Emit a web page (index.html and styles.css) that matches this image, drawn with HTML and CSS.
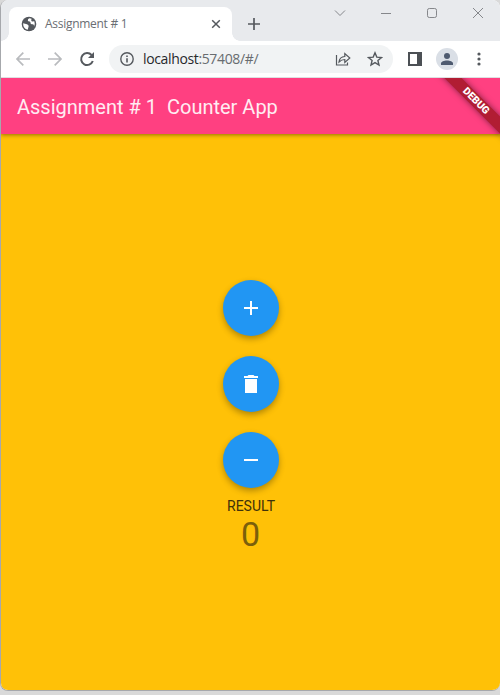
FILE: index.html
```html
<!DOCTYPE html>
<html lang="en">
<head>
<meta charset="utf-8">
<title>Assignment # 1</title>
<link rel="stylesheet" href="styles.css">
</head>
<body>
<div class="window">
  <header class="tabstrip">
    <div class="tab">
      <svg class="globe" width="16" height="16" viewBox="0 0 16 16"><circle cx="8" cy="8" r="7.3" fill="#54585d"/><path d="M2.1 7.2 6 8.2q2 .8 1.6 2.4L6.7 13.8Q2 12.4 2.1 7.2ZM8.5 2.2q-1.8.4-1.7 2 .1 1.200 1.800 1.400 1.200.2.9 1.400-.1 1.100 1.200 1.200l1.300.1q1.300.1 1 2.500Q14.400 8 13.300 5.200l-2.100.3q-1.300-.2-.9-1.500l.3-1.300Z" fill="#fff"/></svg>
      <span class="tab-title">Assignment # 1</span>
      <svg class="tab-close" width="10" height="10" viewBox="0 0 10 10"><path d="m1.200 1.200 7.600 7.600m0-7.600-7.600 7.600" stroke="#55595e" stroke-width="1.500"/></svg>
    </div>
    <svg class="new-tab" width="12" height="12" viewBox="0 0 12 12"><path d="M6 0v12M0 6h12" stroke="#55595e" stroke-width="1.700"/></svg>
    <div class="controls">
      <svg width="12" height="12" viewBox="0 0 12 12"><path d="m1 3.500 5 5 5-5"/></svg>
      <svg width="12" height="12" viewBox="0 0 12 12"><path d="M1 6.500h10"/></svg>
      <svg width="12" height="12" viewBox="0 0 12 12"><rect x="1.500" y="1.500" width="9" height="9" rx="1.800"/></svg>
      <svg width="12" height="12" viewBox="0 0 12 12"><path d="m1 1 10 10m0-10L1 11"/></svg>
    </div>
  </header>
  <nav class="toolbar">
    <svg class="nav dim" width="16" height="16" viewBox="0 0 16 16"><path d="M15 8H2m6.300-6.300L2 8l6.300 6.300"/></svg>
    <svg class="nav dim" width="16" height="16" viewBox="0 0 16 16"><path d="M1 8h13M7.700 1.700 14 8l-6.300 6.300"/></svg>
    <svg class="nav" width="16" height="16" viewBox="0 0 16 16"><path d="M12.600 4A6 6 0 1 0 13.800 10" stroke-width="2"/><path d="M15 1v6H9Z" fill="#55595e" stroke="none"/></svg>
    <div class="address">
      <svg class="info" width="14" height="14" viewBox="0 0 14 14"><circle cx="7" cy="7" r="6.200" fill="none" stroke="#55595e" stroke-width="1.400"/><path d="M6.200 6.200h1.600v4.300H6.200zM6.200 3.500h1.600V5H6.200z" fill="#55595e"/></svg>
      <span class="url">localhost<span class="rest">:57408/#/</span></span>
      <svg class="share" width="16" height="16" viewBox="0 0 16 16"><path d="M1.500 4v10h11v-2.500M4 11Q4.500 5.800 9.800 5.500v-3L14.800 7l-5 4.400V8.500Q6.500 8.500 4 11Z"/></svg>
      <svg class="star" width="16" height="16" viewBox="0 0 16 16"><path d="m8 1.800 1.800 4.300 4.700.4-3.600 3 1.100 4.600-4-2.500-4 2.500 1.100-4.600-3.600-3 4.700-.4Z"/></svg>
    </div>
    <svg class="panel" width="14" height="14" viewBox="0 0 14 14"><path fill="#4c5055" fill-rule="evenodd" d="M0 0h14v14H0ZM2 2v10h7V2Z"/></svg>
    <div class="avatar"><svg width="14" height="14" viewBox="0 0 14 14"><circle cx="7" cy="4" r="3" fill="#4e5a6f"/><path d="M1 13v-1.500C1 7.500 13 7.500 13 11.500V13Z" fill="#4e5a6f"/></svg></div>
    <svg class="more" width="4" height="14" viewBox="0 0 4 14"><g fill="#55595e"><circle cx="2" cy="2" r="1.600"/><circle cx="2" cy="7" r="1.600"/><circle cx="2" cy="12" r="1.600"/></g></svg>
  </nav>
  <div class="app">
    <div class="appbar">Assignment # 1&nbsp; Counter App</div>
    <div class="banner">DEBUG</div>
    <main class="content">
      <button class="fab"><svg width="24" height="24" viewBox="0 0 24 24"><path d="M19 13h-6v6h-2v-6H5v-2h6V5h2v6h6z"/></svg></button>
      <button class="fab"><svg width="24" height="24" viewBox="0 0 24 24"><path d="M6 21h12V7H6zM19 4h-3.500l-1-1h-5l-1 1H5v2h14V4z"/></svg></button>
      <button class="fab"><svg width="24" height="24" viewBox="0 0 24 24"><path d="M19 13H5v-2h14v2z"/></svg></button>
      <div class="label">RESULT</div>
      <div class="count">0</div>
    </main>
  </div>
</div>
</body>
</html>
```

FILE: styles.css
```css
* { box-sizing: border-box; }
body { margin: 0; height: 695px; overflow: hidden; background: #d9d9d9; }
svg { display: block; flex: none; }
.window {
  height: 691px;
  border: solid #a6a8ac;
  border-width: 0 0 1px 1px;
  border-radius: 8px 8px 8px 8px;
  overflow: hidden;
  background: #fff;
}
.tabstrip { display: flex; height: 41px; background: #e8eaed; }
.tab {
  position: relative;
  display: flex;
  align-items: center;
  width: 223px;
  height: 34px;
  margin: 7px 0 0 8px;
  padding: 0 11px 0 12px;
  border-radius: 8px 8px 0 0;
  background: #fff;
}
.tab::before, .tab::after {
  content: "";
  position: absolute;
  bottom: 0;
  width: 8px;
  height: 8px;
}
.tab::before { left: -8px; background: radial-gradient(circle at 0 0, transparent 7.5px, #fff 8px); }
.tab::after { right: -8px; background: radial-gradient(circle at 100% 0, transparent 7.5px, #fff 8px); }
.tab-title {
  margin-left: 8px;
  color: #6a6e73;
  font: 12px/16px "Open Sans", sans-serif;
  letter-spacing: -0.28px;
  white-space: nowrap;
}
.tab-close { margin-left: auto; }
.new-tab { margin: 18px 0 0 16px; }
.controls { display: flex; gap: 34px; margin: 7px 16px 0 auto; }
.controls path, .controls rect { fill: none; stroke: #85878b; stroke-width: 1; }
.toolbar {
  display: flex;
  align-items: center;
  height: 37px;
  padding: 0 0 1px 14px;
  border-bottom: 1px solid #dedfe1;
}
.nav { margin-right: 16px; fill: none; stroke: #55595e; stroke-width: 1.7; }
.dim { stroke: #b9bbbe; }
.address {
  display: flex;
  align-items: center;
  width: 284px;
  height: 28px;
  margin-left: -2px;
  padding: 0 10px 0 11px;
  border-radius: 14px;
  background: #f1f3f4;
}
.url {
  margin-left: 9px;
  color: #27292c;
  font: 14px/20px "Open Sans", sans-serif;
  letter-spacing: -0.36px;
  white-space: nowrap;
}
.rest { color: #686c70; }
.share { margin-left: auto; }
.star { margin-left: 16px; }
.share path, .star path { fill: none; stroke: #55595e; stroke-width: 1.2; }
.star path { stroke-width: 1.4; }
.panel { margin-left: 15px; }
.avatar {
  display: grid;
  place-items: center;
  width: 22px;
  height: 22px;
  margin-left: 14px;
  border-radius: 50%;
  background: #dadfe6;
}
.more { margin-left: 19px; }
.app {
  position: relative;
  height: 612px;
  overflow: hidden;
  background: #ffc107;
}
.appbar {
  position: relative;
  height: 56px;
  padding-left: 16px;
  background: #ff4081;
  box-shadow: 0 1px 4px rgba(0,0,0,.42);
  color: #ffecf2;
  font: 20px/58px Roboto, sans-serif;
  white-space: pre;
}
.banner {
  position: absolute;
  left: 425px;
  top: 17px;
  width: 100px;
  height: 12px;
  transform: rotate(45deg);
  background: #b11d33;
  box-shadow: 0 0 6px rgba(0,0,0,.5);
  color: #fff;
  font: 900 10.2px/12px Roboto, sans-serif;
  text-align: center;
}
.content { display: flex; flex-direction: column; align-items: center; padding: 146px 0 0 1px; }
.fab {
  display: grid;
  place-items: center;
  width: 56px;
  height: 56px;
  margin: 0 0 20px;
  padding: 0;
  border: 0;
  border-radius: 50%;
  background: #2196f3;
  box-shadow: 0 3px 6px rgba(0,0,0,.3);
}
.fab path { fill: #fff; }
.label { margin-top: -10px; color: #40320a; font: 14px/16px Roboto, sans-serif; }
.count { margin-left: -1px; color: #7b5f0b; font: 34px/40px Roboto, sans-serif; }
```
